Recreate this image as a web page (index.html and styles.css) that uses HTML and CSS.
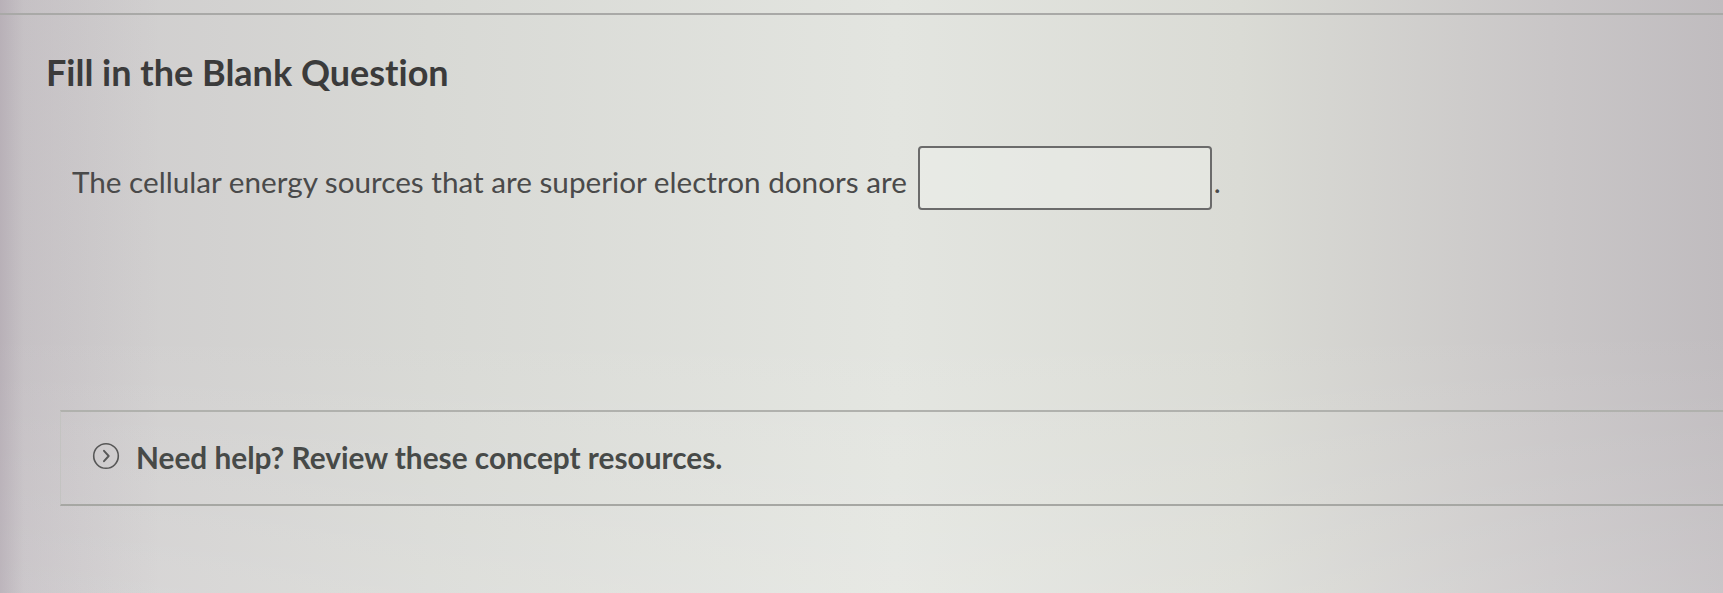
FILE: index.html
```html
<!DOCTYPE html>
<html>
<head>
<meta charset="utf-8">
<link rel="stylesheet" href="styles.css">
</head>
<body>
<div class="screen">
  <div class="topline"></div>
  <h1 class="title">Fill in the Blank Question</h1>
  <p class="question"><span class="qtext">The cellular energy sources that are superior electron donors are</span><span class="blank"></span><span class="period">.</span></p>
  <div class="help">
    <span class="help-icon">
      <svg width="28" height="28" viewBox="0 0 28 28"><circle cx="14" cy="14" r="12.3" fill="none" stroke="#575757" stroke-width="1.6"/><path d="M12 8.8 L16.7 14 L12 19.2" fill="none" stroke="#575757" stroke-width="1.9" stroke-linecap="round" stroke-linejoin="round"/></svg>
    </span>
    <span class="help-text">Need help? Review these concept resources.</span>
  </div>
</div>
</body>
</html>
```
FILE: styles.css
```css
html, body {
  margin: 0;
  padding: 0;
}
body {
  width: 1723px;
  height: 593px;
  overflow: hidden;
  font-family: "Lato", "Open Sans", sans-serif;
  font-variant-ligatures: none;
  background:
    linear-gradient(90deg, rgba(150,135,150,0.38) 0px, rgba(150,135,150,0.14) 24px, rgba(0,0,0,0) 160px),
    linear-gradient(180deg, rgba(255,255,255,0) 55%, rgba(255,255,255,0.14) 100%),
    linear-gradient(90deg, #cdcacc 0%, #d8d9d5 25%, #e3e5e0 52%, #dadbd5 72%, #c9c6c7 90%, #c0bcbf 100%);
}
.screen {
  height: 100%;
}
.topline {
  height: 13px;
  border-bottom: 2px solid #a9a9a7;
}
.title {
  margin: 35px 0 0 46px;
  font-size: 36px;
  font-weight: 700;
  color: #3b3b3b;
  line-height: 44px;
}
.question {
  margin: 52px 0 0 72px;
  font-size: 29.7px;
  color: #4a4a4a;
  display: flex;
  align-items: center;
}
.qtext {
  padding-top: 6px;
}
.blank {
  display: inline-block;
  width: 294px;
  height: 64px;
  margin-left: 11px;
  border: 2px solid #6b6b6b;
  border-radius: 4px;
  background: rgba(240,242,238,0.45);
  box-sizing: border-box;
}
.period {
  padding-top: 6px;
  margin-left: 2px;
}
.help {
  margin: 200px 0 0 60px;
  height: 96px;
  border-top: 2px solid #b0b1ad;
  border-bottom: 2px solid #a6a7a3;
  border-left: 1px solid #c3c3c1;
  display: flex;
  align-items: center;
  padding-left: 31px;
  box-sizing: border-box;
}
.help-icon {
  display: flex;
  margin-right: 16px;
  margin-bottom: 4px;
}
.help-text {
  font-size: 29.8px;
  font-weight: 700;
  color: #474a48;
  margin-bottom: 2px;
}
```
